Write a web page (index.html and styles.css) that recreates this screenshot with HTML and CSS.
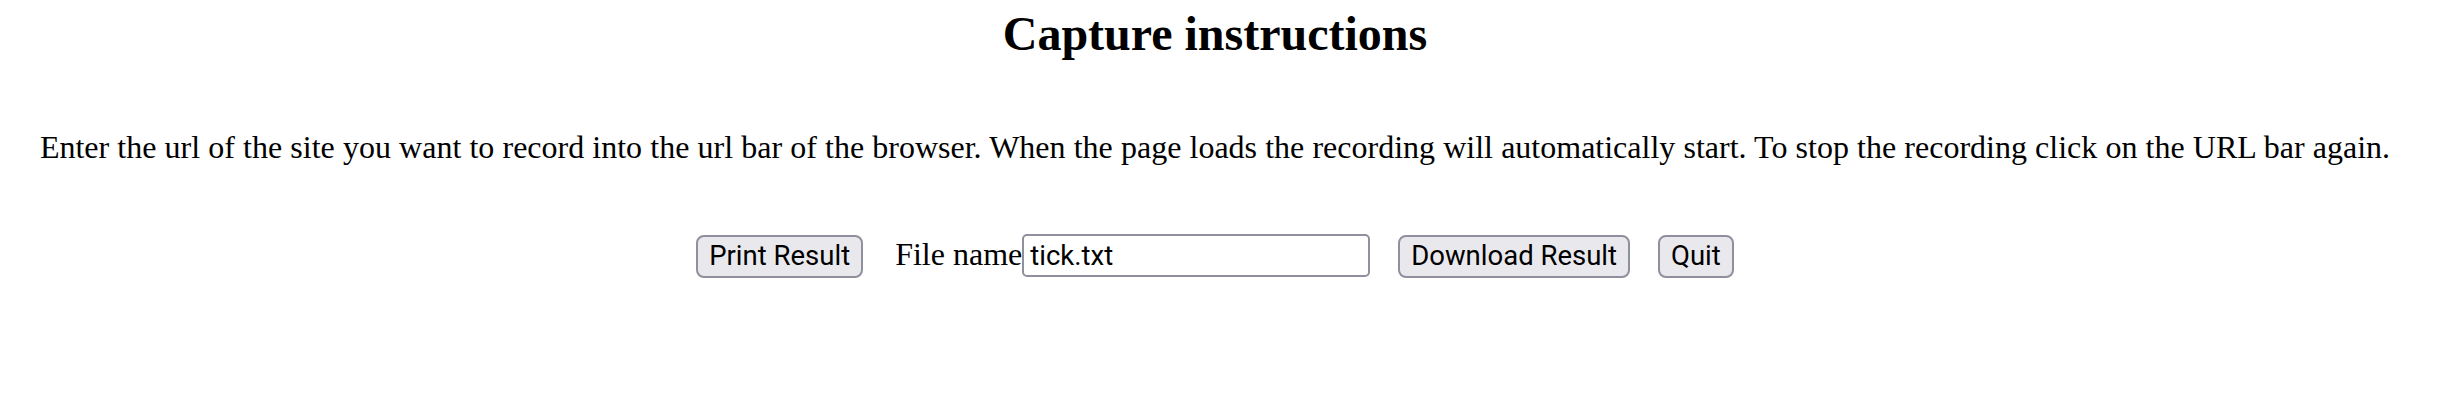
FILE: index.html
```html
<!DOCTYPE html>
<html lang="en">
<head>
<meta charset="utf-8">
<title>Capture instructions</title>
<link rel="stylesheet" href="styles.css">
</head>
<body>
<main class="page">
  <h2 class="title">Capture instructions</h2>
  <p class="instructions">Enter the url of the site you want to record into the url bar of the browser. When the page loads the recording will automatically start. To stop the recording click on the URL bar again.</p>
  <div class="controls">
    <button class="btn" type="button">Print Result</button>
    <label class="file-label" for="fname">File name</label><input class="file-input" id="fname" type="text" value="tick.txt">
    <button class="btn btn-download" type="button">Download Result</button>
    <button class="btn btn-quit" type="button">Quit</button>
  </div>
</main>
</body>
</html>
```

FILE: styles.css
```css
html, body {
  margin: 0;
  padding: 0;
  background: #ffffff;
}

body {
  font-family: "Liberation Serif", "Times New Roman", serif;
  color: #000000;
}

.page {
  padding: 0 36px 0 18px;
  text-align: center;
}

.title {
  margin: 7px 0 0;
  font-size: 48px;
  font-weight: bold;
  line-height: 53px;
}

.instructions {
  margin: 69px 0 0;
  font-size: 32px;
  line-height: 37px;
  word-spacing: 0.15px;
}

.controls {
  margin-top: 68px;
  display: flex;
  justify-content: center;
  align-items: baseline;
}

.btn {
  box-sizing: border-box;
  height: 43px;
  padding: 0 11px;
  border: 2px solid #8f8f9d;
  border-radius: 8px;
  background: #e9e9ed;
  color: #000000;
  font-family: Roboto, "Liberation Sans", sans-serif;
  font-size: 27.5px;
  line-height: 32px;
}

.file-label {
  margin-left: 32px;
  font-size: 32px;
}

.file-input {
  box-sizing: border-box;
  width: 348px;
  height: 43px;
  padding: 0 6px;
  border: 2px solid #8f8f9d;
  border-radius: 5px;
  background: #ffffff;
  color: #000000;
  font-family: Roboto, "Liberation Sans", sans-serif;
  font-size: 27.5px;
}

.btn-download {
  margin-left: 28px;
}

.btn-quit {
  margin-left: 28px;
}
```
